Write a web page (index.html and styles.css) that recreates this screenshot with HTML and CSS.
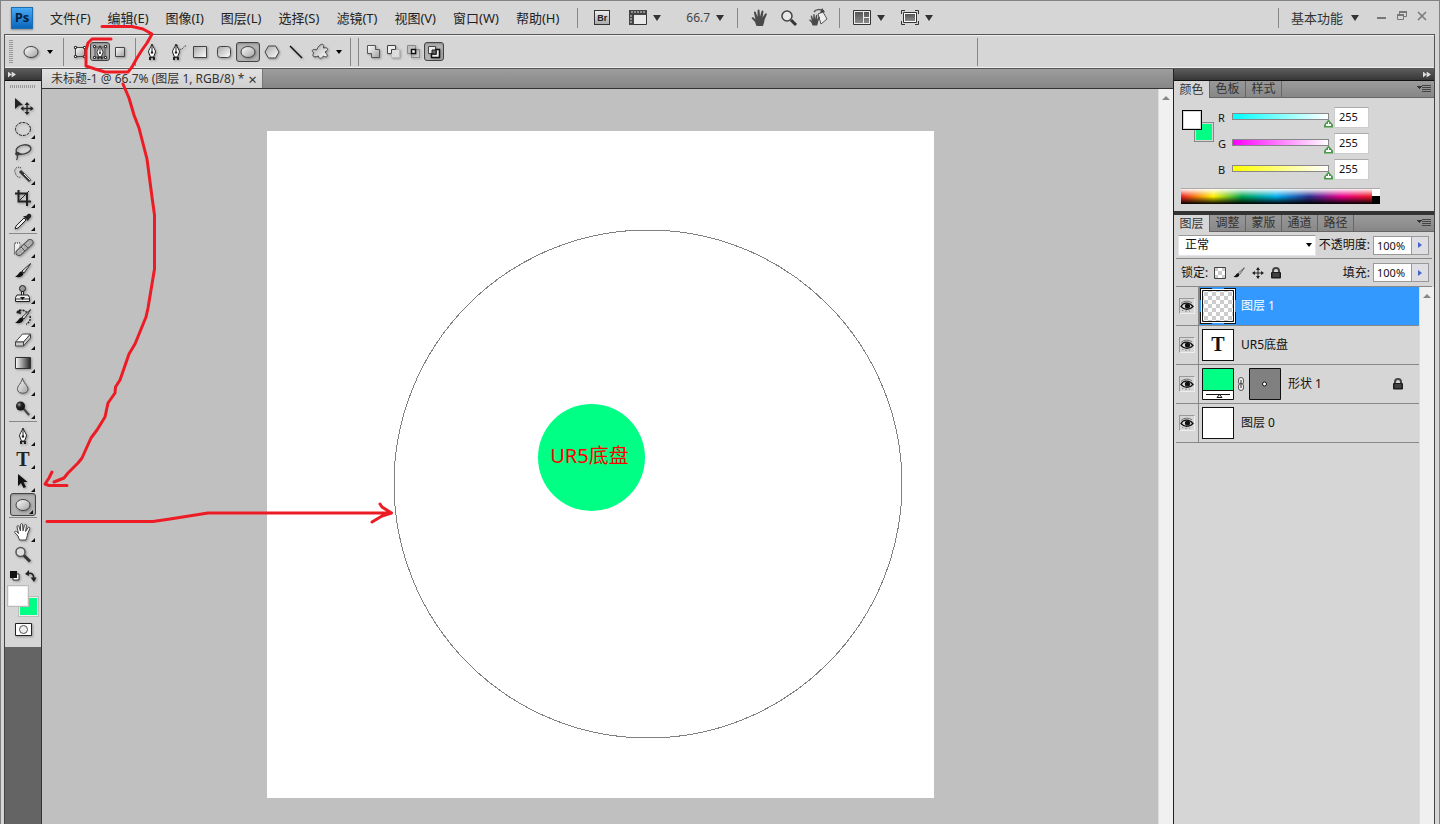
FILE: index.html
```html
<!DOCTYPE html>
<html lang="zh-CN">
<head>
<meta charset="utf-8">
<title>未标题-1</title>
<link rel="stylesheet" href="styles.css">
</head>
<body>
<svg class="defs" aria-hidden="true">
  <defs>
    <linearGradient id="shape" x1="0" y1="0" x2="1" y2="1"><stop offset="0" stop-color="#a8a8a8"/><stop offset="1" stop-color="#ffffff"/></linearGradient>
    <linearGradient id="shine" x1="0" y1="0" x2="1" y2="1"><stop offset="0" stop-color="#ffffff"/><stop offset="1" stop-color="#a0a0a0"/></linearGradient>
    <linearGradient id="ramp"><stop offset="0" stop-color="#ffffff"/><stop offset="1" stop-color="#222222"/></linearGradient>
    <linearGradient id="dark" x1="0" y1="0" x2="0" y2="1"><stop offset="0" stop-color="#555555"/><stop offset="1" stop-color="#8a8a8a"/></linearGradient>
    <radialGradient id="ball" cx=".35" cy=".35" r=".7"><stop offset="0" stop-color="#999999"/><stop offset=".4" stop-color="#222222"/><stop offset="1" stop-color="#111111"/></radialGradient>
    <pattern id="checks" width="8" height="8" patternUnits="userSpaceOnUse"><path fill="#fff" d="M0 0h8v8H0z"/><path fill="#ccc" d="M0 0h4v4H0zM4 4h4v4H4z"/></pattern>
    <symbol id="pen" viewBox="0 0 16 20"><path d="M8 2C6.500 6 4.500 8 4.500 10l2 5h3l2-5c0-2-2-4-3.500-8z" fill="#fff" stroke="#222"/><path d="M8 3v7" stroke="#222"/><circle cx="8" cy="10.500" r="1.200" fill="#222"/><path d="M5 15h6v3H9v-2H7v2H5z" fill="#222"/></symbol>
    <symbol id="oval" viewBox="0 0 20 20"><ellipse cx="10" cy="10" rx="7" ry="5.500" fill="url(#shine)" stroke="#444"/></symbol>
    <symbol id="hand" viewBox="0 0 20 20"><path d="M6.500 18 5 14 1.800 10.500c-.6-1.200 1-1.700 1.800-.9L5.500 11.500 4 5c-.3-1.600 1.500-2 1.900-.5L7.500 9 7.600 2.800c0-1.600 1.900-1.600 2 0L10 8.800l1.500-5.500c.4-1.500 2.200-1 1.900.5L12.600 9.500l2.400-3.700c.9-1.200 2.300-.3 1.700 1L14.500 12c-.2 2.500-1 4-1.500 6z"/></symbol>
    <symbol id="lock" viewBox="0 0 12 12"><path d="M3 6V4a3 3 0 0 1 6 0v2" fill="none" stroke="#444" stroke-width="2"/><rect x="1" y="5" width="10" height="6.500" rx="1" fill="#1c1c1c"/><path d="M2.500 7h7M2.500 9h7" stroke="#666"/></symbol>
    <symbol id="brush" viewBox="0 0 20 20"><path d="M17.500 2.500 9 10l2 2 6.500-9z" fill="#ddd" stroke="#333"/><path d="M9 10.500C6 10 6 14 2 15.500c3 1.500 8 .5 8.500-3z" fill="#111"/></symbol>
    <symbol id="eye" viewBox="0 0 14 12"><path d="M1 6.500C3 2.500 9 1.500 13 6.500 9.500 10.500 4 10 1 6.500z" fill="#ddd" stroke="#111" stroke-width="1.300"/><circle cx="7.500" cy="6" r="2.600" fill="#111"/><path d="M1 3.500C4 .5 9 .5 12 3M3 10l-.5 1M6 10.500V12M9 10.500l.5 1" fill="none" stroke="#555" stroke-width=".8"/></symbol>
  </defs>
</svg>

<header class="menubar">
  <div class="logo">Ps</div>
  <nav class="menus">
    <button>文件(F)</button><button>编辑(E)</button><button>图像(I)</button><button>图层(L)</button><button>选择(S)</button><button>滤镜(T)</button><button>视图(V)</button><button>窗口(W)</button><button>帮助(H)</button>
  </nav>
  <div class="apptools first">
    <button class="bridge" aria-label="Bridge">Br</button>
    <button class="drop" aria-label="查看额外内容"><svg width="18" height="16" viewBox="0 0 18 16"><path d="M.5.500h17v14H.5z" fill="#e8e8e8" stroke="#333"/><path d="M0 0h18v5H5v10H0z" fill="#444"/><path d="M3 1v2M6 1v2M9 1v2M12 1v2M15 1v2M1 6h2M1 9h2M1 12h2" stroke="#ddd"/></svg><i class="caret"></i></button>
    <label class="pick zoom"><select aria-label="缩放级别"><option>66.7</option></select><i class="caret"></i></label>
  </div>
  <div class="apptools second">
    <button aria-label="抓手工具"><svg width="20" height="20"><use href="#hand" fill="#4a4a4a"/></svg></button>
    <button aria-label="缩放工具"><svg width="20" height="20" viewBox="0 0 20 20"><circle cx="8" cy="8" r="5" fill="#e8e8e8" stroke="#444" stroke-width="1.500"/><path d="m12 12 5 5" stroke="#333" stroke-width="3"/></svg></button>
    <button aria-label="旋转视图工具"><svg width="20" height="20" viewBox="0 0 20 20"><path d="m10 6 5-2 4 7-6 5z" fill="#eee" stroke="#555"/><use href="#hand" x="0" y="5" width="14" height="14" fill="#4a4a4a"/><path d="M6 4c2-3 6-3 9-1" fill="none" stroke="#555" stroke-width="1.500"/><path d="m14 0 3 4-5 1z" fill="#444"/></svg></button>
  </div>
  <div class="apptools third">
    <button class="drop" aria-label="排列文档"><svg width="18" height="16" viewBox="0 0 18 16"><path d="M.5.500h17v14H.5z" fill="#eee" stroke="#333"/><path d="M2 2h8v11H2zM11 2h5v5h-5zM11 8h5v5h-5z" fill="url(#dark)"/></svg><i class="caret"></i></button>
    <button class="drop" aria-label="屏幕模式"><svg width="18" height="16" viewBox="0 0 18 16"><path d="M.5 4V.500H4M14 .5h3.500V4M17.500 11v3.500H14M4 14.500H.500V11" fill="none" stroke="#333"/><path d="M2.500 2.500h13v10h-13z" fill="#fff" stroke="#333"/><path d="M4 4h10v7H4z" fill="url(#dark)"/></svg><i class="caret"></i></button>
  </div>
  <div class="winside">
    <label class="pick workspace"><select aria-label="工作区"><option>基本功能</option></select><i class="caret"></i></label>
    <button aria-label="最小化"><svg width="10" height="12" viewBox="0 0 10 12"><path d="M0 8h9" stroke="#777" stroke-width="2"/></svg></button>
    <button aria-label="还原"><svg width="10" height="12" viewBox="0 0 10 12"><path d="M2.500 4V1.500h7v5H7M.5 5h6v4.500h-6z" fill="none" stroke="#777"/><path d="M0 5h7M2 2h8" stroke="#777" stroke-width="2"/></svg></button>
    <button aria-label="关闭"><svg width="10" height="12" viewBox="0 0 10 12"><path d="m1 2 8 8M9 2l-8 8" stroke="#777" stroke-width="1.500"/></svg></button>
  </div>
</header>

<section class="optbar" aria-label="选项栏">
  <i class="grip-v"></i>
  <button class="current" aria-label="椭圆工具预设"><svg width="20" height="20"><use href="#oval"/></svg><i class="caret small"></i></button>
  <div class="group modes">
    <button aria-label="形状图层"><svg width="16" height="16" viewBox="0 0 16 16"><path d="M3.500 3.500h9v9h-9z" fill="url(#shine)" stroke="#444"/><path d="M2.500 2.500h2v2h-2zM11.500 2.500h2v2h-2zM2.500 11.500h2v2h-2zM11.500 11.500h2v2h-2z" fill="#fff" stroke="#333"/></svg></button>
    <button class="on" aria-label="路径"><svg width="18" height="18" viewBox="0 0 18 18"><path d="M4 4h10v10H4z" fill="none" stroke="#555"/><path d="M2.500 2.500h2v2h-2zM13.500 2.500h2v2h-2zM2.500 13.500h2v2h-2zM13.500 13.500h2v2h-2z" fill="#fff" stroke="#333"/><use href="#pen" x="2" y="1" width="14" height="17"/></svg></button>
    <button aria-label="填充像素"><svg width="16" height="16" viewBox="0 0 16 16"><path d="M3.500 3.500h9v9h-9z" fill="url(#shine)" stroke="#444"/></svg></button>
  </div>
  <div class="group shapes">
    <button aria-label="钢笔"><svg width="16" height="20"><use href="#pen"/></svg></button>
    <button aria-label="自由钢笔"><svg width="22" height="20" viewBox="0 0 22 20"><use href="#pen" x="3" width="16" height="20"/><path d="M12 3c0 4 3 5 5 4s2-4 4-3" fill="none" stroke="#222" stroke-dasharray="1 1"/></svg></button>
    <button aria-label="矩形"><svg width="20" height="20" viewBox="0 0 20 20"><path d="M3.500 4.500h13v11h-13z" fill="url(#shape)" stroke="#444"/></svg></button>
    <button aria-label="圆角矩形"><svg width="20" height="20" viewBox="0 0 20 20"><rect x="3.500" y="4.500" width="13" height="11" rx="3" fill="url(#shape)" stroke="#444"/></svg></button>
    <button class="on" aria-label="椭圆"><svg width="20" height="20"><use href="#oval"/></svg></button>
    <button aria-label="多边形"><svg width="20" height="20" viewBox="0 0 20 20"><path d="M6.500 4h7l3.500 6-3.500 6h-7L3 10z" fill="url(#shape)" stroke="#444"/></svg></button>
    <button aria-label="直线"><svg width="20" height="20" viewBox="0 0 20 20"><path d="m4 4 12 12" stroke="#111" stroke-width="1.400"/></svg></button>
    <button aria-label="自定形状"><svg width="20" height="20" viewBox="0 0 20 20"><path d="M11 2.500c2-1 3 1 2.500 3.500 5-1 5.500 2 1.500 4 4 4 2 6-1.500 4-3 4-5 2-5 0-5 2-7 0-4.500-3-3-2-2-4.500 2.500-3 1-1 1.500-4 4.500-5.500z" fill="url(#shape)" stroke="#444"/></svg></button>
    <button class="tiny" aria-label="几何选项"><i class="caret small"></i></button>
  </div>
  <div class="group ops">
    <button aria-label="添加到形状区域"><svg width="16" height="16" viewBox="0 0 16 16"><path d="M1.500 1.500h8v4h4v8h-8v-4h-4z" fill="url(#shine)" stroke="#555"/></svg></button>
    <button aria-label="从形状区域减去"><svg width="16" height="16" viewBox="0 0 16 16"><path d="M5.500 5.500h8v8h-8z" fill="#ddd" stroke="#bbb"/><path d="M1.500 1.500h8v4h-4v4h-4z" fill="#eee" stroke="#444"/></svg></button>
    <button aria-label="交叉形状区域"><svg width="16" height="16" viewBox="0 0 16 16"><path d="M1.500 1.500h8v8h-8zM5.500 5.500h8v8h-8z" fill="none" stroke="#888"/><path d="M5.500 5.500h4v4h-4z" fill="#fff" stroke="#111" stroke-width="1.500"/></svg></button>
    <button class="on" aria-label="重叠形状区域除外"><svg width="16" height="16" viewBox="0 0 16 16"><path d="M2.500 2.500h7v7h-7z" fill="#eee" stroke="#444"/><path d="M10 5.500h3.500v8h-8V10H10z" fill="#eee" stroke="#111" stroke-width="1.500"/><path d="M6 6h4v4H6z" fill="#666" stroke="#222"/></svg></button>
  </div>
</section>

<main class="work">
  <aside class="toolbox" aria-label="工具">
    <button class="dockhead" aria-label="展开面板"><i class="ff"></i></button>
    <div class="tools">
      <i class="grip-h"></i>
      <button aria-label="移动"><svg width="22" height="20" viewBox="0 0 22 20"><path d="m3 2 8 7-4 .5L3 13z" fill="#222"/><path d="M15 7v11M9.500 12.500h11" stroke="#222" stroke-width="1.300"/><path d="m15 6 2.500 3h-5zM15 19l2.500-3h-5zM8.500 12.500l3-2.500v5zM21.500 12.500l-3-2.500v5z" fill="#222"/></svg></button>
      <button class="more" aria-label="椭圆选框"><svg width="20" height="20" viewBox="0 0 20 20"><ellipse cx="10" cy="10" rx="7.500" ry="6.500" fill="none" stroke="#222" stroke-dasharray="3 1"/></svg></button>
      <button class="more" aria-label="套索"><svg width="20" height="20" viewBox="0 0 20 20"><ellipse cx="10.500" cy="7.500" rx="7.500" ry="4.500" fill="none" stroke="#444" stroke-width="1.400" transform="rotate(-12 10.500 7.500)"/><path d="M4 10c-3 2 0 4 2 2.500S3.500 9.500 4 12s1 4-.5 6" fill="none" stroke="#333" stroke-width="1.200"/></svg></button>
      <button class="more" aria-label="快速选择"><svg width="20" height="20" viewBox="0 0 20 20"><path d="M8 3C5 1 1 3 2 7s3 6 6 5" fill="none" stroke="#333" stroke-dasharray="1 1"/><path d="m7 6 10 10" stroke="#333" stroke-width="3"/><path d="m11 9 6 6" stroke="#ddd"/></svg></button>
      <button class="more" aria-label="裁剪"><svg width="20" height="20" viewBox="0 0 20 20"><path d="M5.500 2v11.500H18M2 5.500h12V18" fill="none" stroke="#222" stroke-width="2"/><path d="M7 12 16 3" stroke="#222"/></svg></button>
      <button class="more" aria-label="吸管"><svg width="20" height="20" viewBox="0 0 20 20"><path d="m11 7 2 2-8 8-3 1 1-3z" fill="#eee" stroke="#222"/><path d="m10 5 5 5 1-2 2-2c1-2-1-4-3-3l-2 2z" fill="#222"/></svg></button>
      <hr>
      <button class="more" aria-label="修复画笔"><svg width="24" height="20" viewBox="0 0 24 20"><path d="M9 5H3.500v11H7" fill="#eee" stroke="#222" stroke-dasharray="1 1"/><path d="m8 14.500 11-10" stroke="#555" stroke-width="7" stroke-linecap="round"/><path d="m8 14.500 11-10" stroke="#aaa" stroke-width="5" stroke-linecap="round"/><path d="m7.500 13 11-9M9 16l11-10" stroke="#eee" stroke-dasharray="1 2"/><path d="m10 9 4 4M13 6l4 4" stroke="#555"/></svg></button>
      <button class="more" aria-label="画笔"><svg width="20" height="20"><use href="#brush"/></svg></button>
      <button class="more" aria-label="仿制图章"><svg width="20" height="20" viewBox="0 0 20 20"><circle cx="9.500" cy="4.500" r="3" fill="#999" stroke="#222"/><path d="M8.500 7.500h2v4h-2z" fill="#eee" stroke="#222"/><path d="M4 11h11l1.500 2.500v4H2.500v-4z" fill="#eee" stroke="#222"/><path d="M3 15h13" stroke="#333"/><path d="M7 13h5l-2.500 3z" fill="#111"/></svg></button>
      <button class="more" aria-label="历史记录画笔"><svg width="20" height="20" viewBox="0 0 20 20"><path d="M4 5c3-3 9-2 11 2M17 9c1 4-1 7-4 8" fill="none" stroke="#222" stroke-width="1.500" stroke-dasharray="2 1"/><path d="m3 6 4-4 1 5z" fill="#222"/><use href="#brush"/></svg></button>
      <button class="more" aria-label="橡皮擦"><svg width="20" height="20" viewBox="0 0 20 20"><path d="m2.500 12 7-8h8l-7 8z" fill="#fff" stroke="#444"/><path d="M2.500 12h8v4h-8zM10.500 12l7-8v4l-7 8z" fill="#ccc" stroke="#444"/></svg></button>
      <button class="more" aria-label="渐变"><svg width="20" height="20" viewBox="0 0 20 20"><path d="M2.500 4.500h15v11h-15z" fill="url(#ramp)" stroke="#333"/></svg></button>
      <button class="more" aria-label="模糊"><svg width="20" height="20" viewBox="0 0 20 20"><path d="M9.500 2C9 7 4 10 4.500 13.500c.5 5 10 5 10.500 0C15.500 10 10 7 9.500 2z" fill="url(#shine)" stroke="#555"/></svg></button>
      <button class="more" aria-label="减淡"><svg width="20" height="20" viewBox="0 0 20 20"><path d="m10 9 6 7" stroke="#444" stroke-width="2"/><circle cx="7.500" cy="7" r="4.500" fill="url(#ball)"/></svg></button>
      <hr>
      <button class="more" aria-label="钢笔工具"><svg width="16" height="20"><use href="#pen"/></svg></button>
      <button class="more type" aria-label="文字">T</button>
      <button class="more" aria-label="路径选择"><svg width="20" height="20" viewBox="0 0 20 20"><path d="M5 2v12l3-3 2.500 5 2.500-1-2.500-5h4z" fill="#111"/></svg></button>
      <button class="more on" aria-label="椭圆工具"><svg width="20" height="20"><use href="#oval"/></svg></button>
      <hr>
      <button class="more" aria-label="抓手"><svg width="20" height="20"><use href="#hand" fill="#fff" stroke="#444"/></svg></button>
      <button aria-label="缩放"><svg width="20" height="20" viewBox="0 0 20 20"><circle cx="7.500" cy="7" r="4.500" fill="#ddd" stroke="#555" stroke-width="1.500"/><path d="m11 10.500 6 6" stroke="#333" stroke-width="3"/></svg></button>
      <div class="mini">
        <button aria-label="默认颜色"><svg width="12" height="12" viewBox="0 0 12 12"><path d="M4 4h6v6H4z" fill="#fff" stroke="#333"/><path d="M1 1h7v7H1z" fill="#111"/></svg></button>
        <button aria-label="切换颜色"><svg width="12" height="12" viewBox="0 0 12 12"><path d="M3 3.500c4-1 6 1 5.500 5" fill="none" stroke="#222" stroke-width="1.500"/><path d="m0 4 4-4v6zM5.500 7.500h6L9 12z" fill="#222"/></svg></button>
      </div>
      <div class="swatches"><button class="back" aria-label="背景色"></button><button class="fore" aria-label="前景色"></button></div>
      <button class="mask" aria-label="快速蒙版"><svg width="17" height="13" viewBox="0 0 17 13"><path d="M.5.500h16v12H.5z" fill="#fff" stroke="#222"/><circle cx="8.500" cy="6.500" r="4" fill="#eee" stroke="#555"/></svg></button>
    </div>
  </aside>

  <section class="document">
    <div class="doctabs"><div class="doctab"><span>未标题-1 @ 66.7% (图层 1, RGB/8) *</span><button aria-label="关闭文档">×</button></div></div>
    <div class="view">
      <div class="stage">
        <div class="artboard">
          <div class="disc">UR5底盘</div>
          <svg class="ring" viewBox="0 0 510 510"><circle cx="255" cy="255" r="254" fill="none" stroke="#808080" shape-rendering="crispEdges"/></svg>
        </div>
      </div>
      <div class="scroll"><i class="up"></i></div>
    </div>
  </section>

  <aside class="dock">
    <button class="dockhead right" aria-label="折叠面板"><i class="ff"></i></button>
    <section class="panel">
      <div class="tabs"><button class="active">颜色</button><button>色板</button><button>样式</button><i class="flyout"></i></div>
      <div class="color">
        <div class="pair"><button class="back" aria-label="背景色"></button><button class="fore" aria-label="前景色"></button></div>
        <div class="channels">
          <div class="channel"><label for="r">R</label><input class="cyan" type="range" min="0" max="255" value="255" aria-label="R"><input id="r" type="text" value="255"></div>
          <div class="channel"><label for="g">G</label><input class="magenta" type="range" min="0" max="255" value="255" aria-label="G"><input id="g" type="text" value="255"></div>
          <div class="channel"><label for="b">B</label><input class="yellow" type="range" min="0" max="255" value="255" aria-label="B"><input id="b" type="text" value="255"></div>
        </div>
        <div class="spectrum"><i class="rainbow"></i><i class="bw"></i></div>
      </div>
    </section>
    <section class="panel layers">
      <div class="tabs"><button class="active">图层</button><button>调整</button><button>蒙版</button><button>通道</button><button>路径</button><i class="flyout"></i></div>
      <div class="row blend">
        <label class="pick mode"><select aria-label="混合模式"><option>正常</option></select><i class="caret small"></i></label>
        <div class="amount"><label for="op">不透明度:</label><input id="op" type="text" value="100%"><button aria-label="不透明度滑块"></button></div>
      </div>
      <div class="row locks">
        <span>锁定:</span>
        <button aria-label="锁定透明像素"><svg width="12" height="12" viewBox="0 0 12 12"><path d="M.5.500h11v11H.5z" fill="#fff" stroke="#444"/><path d="M1 1h3v3H1zM8 1h3v3H8zM4 4h4v4H4zM1 8h3v3H1zM8 8h3v3H8z" fill="#ccc"/></svg></button>
        <button aria-label="锁定图像像素"><svg width="14" height="14"><use href="#brush"/></svg></button>
        <button aria-label="锁定位置"><svg width="12" height="12" viewBox="0 0 12 12"><path d="M6 1v10M1 6h10" stroke="#222"/><path d="m6 0 2 3H4zM6 12l2-3H4zM0 6l3-2v4zM12 6 9 4v4z" fill="#222"/></svg></button>
        <button aria-label="锁定全部"><svg width="12" height="12"><use href="#lock"/></svg></button>
        <div class="amount"><label for="fill">填充:</label><input id="fill" type="text" value="100%"><button aria-label="填充滑块"></button></div>
      </div>
      <div class="layerlist">
        <ul>
          <li class="selected"><button class="vis" aria-label="可见性"><svg width="14" height="12"><use href="#eye"/></svg></button><div class="layer"><svg class="thumb framed" width="36" height="36" viewBox="0 0 36 36"><path d="M1 1h34v34H1z" fill="#fff"/><path d="M12 0h12v1H12zM12 35h12v1H12zM0 12h1v12H0zM35 12h1v12h-1z" fill="#39f"/><path d="M0 .5h12M24 .5h12M0 35.500h12M24 35.500h12M.5 0v12M.5 24v12M35.500 0v12M35.500 24v12" stroke="#111"/><path d="M2.500 2.500h31v31h-31z" fill="url(#checks)" stroke="#111"/></svg><span>图层 1</span></div></li>
          <li><button class="vis" aria-label="可见性"><svg width="14" height="12"><use href="#eye"/></svg></button><div class="layer"><div class="thumb text">T</div><span>UR5底盘</span></div></li>
          <li><button class="vis" aria-label="可见性"><svg width="14" height="12"><use href="#eye"/></svg></button><div class="layer"><svg class="thumb" width="32" height="32" viewBox="0 0 32 32"><path d="M.5.500h31v31H.5z" fill="#00ff85" stroke="#111"/><path d="M1 23h30v8H1z" fill="#fff"/><path d="M0 22.500h32M4 26.500h24" stroke="#111"/><path d="m15 29.500 2.500-3 2.500 3z" fill="#fff" stroke="#111"/></svg><svg class="chain" width="8" height="14" viewBox="0 0 8 14"><rect x="1.500" y=".5" width="5" height="7" rx="2.500" fill="#eee" stroke="#555"/><rect x="1.500" y="6.500" width="5" height="7" rx="2.500" fill="#eee" stroke="#555"/><path d="M4 3v8" stroke="#333"/></svg><svg class="thumb" width="32" height="32" viewBox="0 0 32 32"><path d="M.5.500h31v31H.5z" fill="#808080" stroke="#111"/><circle cx="15.500" cy="16" r="2" fill="#fff" stroke="#111"/></svg><span>形状 1</span><svg class="locked" width="12" height="12"><use href="#lock"/></svg></div></li>
          <li><button class="vis" aria-label="可见性"><svg width="14" height="12"><use href="#eye"/></svg></button><div class="layer"><div class="thumb"></div><span>图层 0</span></div></li>
        </ul>
        <div class="scroll"><i class="up"></i></div>
      </div>
    </section>
  </aside>
</main>

<svg class="notes" width="420" height="560" viewBox="0 0 420 560" aria-hidden="true">
  <path d="M102 26.500h30l11 2.500 9 5-5 9-5 7-5 8-5 9-4 5h-23l-10-3-9-3V50l2-7 4-4h19"/>
  <path d="m123 84 6 14 5 17 5 13 8 31 5 38 2.500 18v54L148 308l-2 9-11 27-6 10-9 26-4.500 7-.5 6-7 10-3 14-8 13-6 8-9 20-4 5-10 10-4 5-10 4"/>
  <path d="m52 472-3 6-4 6 4 1.500h18"/>
  <path d="M47 521.500h106l17-2.500 38-6h183M380 504l2 3 9.500 6-9.500 3-10 6"/>
</svg>
</body>
</html>
```

FILE: styles.css
```css
* { box-sizing: border-box; }
html, body { height: 100%; }
body {
  margin: 0; display: flex; flex-direction: column; overflow: hidden;
  background: #d6d6d6; border: 1px solid #828282; border-width: 1px 1px 0;
  padding: 0 4px 0 3px; position: relative;
  font: 12px/16px "Noto Sans", "Noto Sans CJK SC", sans-serif; color: #111;
}
.defs { position: absolute; width: 0; height: 0; }
button { border: 0; padding: 0; margin: 0; background: none; font: inherit; color: inherit; display: flex; align-items: center; justify-content: center; }
svg { display: block; flex: none; }
select, input { font: inherit; color: inherit; border: 0; margin: 0; padding: 0; border-radius: 0; background: none; appearance: none; outline: 0; }
i { display: block; flex: none; }
.caret { border: 4px solid transparent; border-top: 6px solid #333; border-bottom: 0; }
.caret.small { border-width: 4px 3px 0; border-top-color: #000; }
.tools svg, .optbar svg { filter: drop-shadow(1px 1px 1px rgba(0, 0, 0, .3)); }

.menubar { flex: none; height: 33px; display: flex; align-items: center; font-size: 13px; color: #222; }
.logo { width: 22px; height: 22px; margin: 0 17px 0 7px; background: linear-gradient(#48a9f5, #0b66bb); border: 1px solid #1c6eb0; color: #04203d; font: bold 13px/18px "Open Sans", sans-serif; text-align: center; box-shadow: 0 1px 2px #888; }
.menus { display: flex; gap: 17px; }
.apptools { display: flex; align-items: center; height: 20px; border-left: 1px solid #888; }
.first { margin-left: 18px; padding-left: 16px; }
.second { margin-left: 13px; padding-left: 12px; gap: 9px; }
.third { margin-left: 11px; padding-left: 13px; gap: 16px; }
.bridge { width: 16px; height: 15px; border: 1px solid #333; background: linear-gradient(#eee, #aaa); font: bold 9px/12px "Liberation Sans", sans-serif; margin-right: 19px; }
.drop { gap: 6px; }
.pick { display: flex; align-items: center; }
.zoom { margin-left: 25px; font-size: 12px; }
.zoom select { width: 30px; color: #444; }
.winside { margin-left: auto; display: flex; align-items: center; gap: 10px; padding-right: 8px; }
.winside button { margin-bottom: 4px; }
.workspace { border-left: 1px solid #888; height: 20px; padding-left: 12px; margin-right: 8px; }
.workspace select { width: 60px; color: #333; }

.optbar { flex: none; height: 35px; display: flex; align-items: center; border: 1px solid #555; box-shadow: inset 0 1px #f0f0f0, inset 0 -1px #eee; padding-left: 4px; }
.grip-v { width: 4px; height: 24px; background: repeating-linear-gradient(#999 0 1px, transparent 1px 2px); }
.current { margin-left: 8px; gap: 6px; }
.group { display: flex; align-items: center; border-left: 1px solid #888; height: 28px; }
.modes { margin-left: 10px; padding: 0 5px 0 6px; }
.modes button, .ops button { width: 20px; height: 19px; }
.shapes { padding: 0 4px 0 4px; border-right: 1px solid #888; }
.shapes button { width: 24px; height: 20px; }
.shapes .tiny { width: 14px; }
.ops { margin-left: 7px; padding-left: 5px; flex: 0 0 620px; border-right: 1px solid #888; }
.modes .on, .ops .on, .shapes .on, .tools .on { border: 1px solid #444; border-radius: 3px; background: #b4b4b4; box-shadow: inset 0 1px 2px #888; }

.work { flex: 1; min-height: 0; display: flex; border: 1px solid #444; border-width: 0 1px; }
.toolbox { flex: none; width: 37px; background: #646464; border-right: 1px solid #333; }
.dockhead { width: 100%; height: 12px; padding-left: 3px; justify-content: flex-start; background: linear-gradient(#5c5c5c, #363636); border-bottom: 1px solid #111; }
.dockhead.right { justify-content: flex-end; padding-right: 3px; }
.ff { width: 8px; height: 6px; background: #ddd; clip-path: polygon(0 0, 45% 50%, 45% 0, 100% 50%, 45% 100%, 45% 50%, 0 100%); }
.tools { background: #d6d6d6; height: 566px; padding: 4px 4px 0; }
.grip-h { height: 3px; margin: 0 1px 6px; background: repeating-linear-gradient(90deg, #999 0 1px, transparent 1px 2px); }
.tools > button { position: relative; width: 28px; height: 23px; }
.tools > .on { width: 26px; margin: 0 1px; }
.more::after { content: ""; position: absolute; right: 2px; bottom: 1px; border: 2px solid #111; border-top-color: transparent; border-left-color: transparent; }
.tools hr { border: 0; height: 1px; background: #888; margin: 1px 0 2px; }
.type { font: bold 20px/20px "Liberation Serif", serif; color: #222; }
.mini { display: flex; justify-content: space-between; padding: 4px 0; }
.swatches { position: relative; height: 30px; margin: 0 -1px; }
.swatches button { position: absolute; width: 19px; height: 19px; right: 0; bottom: 0; background: #00ff85; border: 1px solid #eee; outline: 1px solid #bbb; }
.swatches .fore { right: auto; left: 0; top: 0; width: 20px; height: 20px; background: #fff; }
.tools > .mask { margin-top: 2px; }

.document { flex: 1; min-width: 0; display: flex; flex-direction: column; }
.doctabs { height: 20px; display: flex; background: linear-gradient(#9d9d9d, #868686); border-bottom: 1px solid #333; }
.doctab { display: flex; align-items: center; gap: 4px; padding: 0 5px 0 9px; background: linear-gradient(#e2e2e2, #cfcfcf); border-right: 1px solid #777; color: #333; white-space: nowrap; }
.doctab button { font-size: 15px; }
.view { flex: 1; min-height: 0; display: flex; background: #c0c0c0; }
.stage { flex: 1; min-width: 0; display: flex; justify-content: center; align-items: flex-start; padding-top: 42px; overflow: hidden; }
.artboard { position: relative; flex: none; width: 667px; height: 667px; background: #fff; }
.disc { position: absolute; left: 271px; top: 273px; width: 107px; height: 107px; padding-right: 3px; border-radius: 50%; background: #00ff85; color: #f00; font-size: 20px; line-height: 104px; text-align: center; white-space: nowrap; }
.ring { position: absolute; left: 126px; top: 98px; width: 510px; height: 510px; }
.scroll { flex: none; width: 15px; background: #f0f0f0; border-left: 1px solid #ddd; padding: 7px 0 0 3px; }
.up { width: 8px; height: 4px; background: #888; clip-path: polygon(50% 0, 100% 100%, 0 100%); }

.dock { flex: none; width: 261px; border-left: 1px solid #222; display: flex; flex-direction: column; }
.tabs { display: flex; height: 17px; background: linear-gradient(#9c9c9c, #868686); border-bottom: 1px solid #666; padding-right: 3px; }
.tabs button { width: 36px; border-right: 1px solid #666; color: #333; background: linear-gradient(#999, #888); }
.tabs .active { background: #d6d6d6; margin-bottom: -1px; }
.flyout { align-self: center; margin-left: auto; width: 14px; height: 8px; background: linear-gradient(#444, #444) right 0/9px 1px, linear-gradient(#444, #444) right 2px/9px 1px, linear-gradient(#444, #444) right 4px/9px 1px, linear-gradient(#444, #444) right 6px/9px 1px, conic-gradient(from -45deg at 50% 100%, #333 90deg, transparent 0) 0 1px/5px 3px; background-repeat: no-repeat; }
.color { display: grid; grid-template-columns: 36px 1fr; padding: 7px 8px 7px; border-bottom: 4px solid #333; font-size: 11px; }
.pair { position: relative; width: 32px; height: 32px; margin-top: 5px; }
.pair button { position: absolute; right: 0; bottom: 0; width: 20px; height: 20px; background: #00ff85; border: 1px solid #888; box-shadow: inset 0 0 0 1px #d6d6d6; }
.pair .fore { right: auto; left: 0; top: 0; background: #fff; border-color: #000; }
.channel { display: flex; height: 26px; align-items: center; }
.channel label { width: 9px; }
.channel input[type=text] { width: 35px; height: 21px; margin: 0 0 2px 1px; padding: 0 3px 2px 4px; background: #fff; border: 1px solid #ccc; border-top-color: #aaa; }
.cyan { --c: #0ff; }
.magenta { --c: #f0f; }
.yellow { --c: #ff0; }
.channel input[type=range] { width: 106px; height: 14px; margin-top: 4px; background: linear-gradient(90deg, var(--c), #fff) 6px 1px/95px 5px no-repeat, linear-gradient(#888, #888) 5px 0/97px 7px no-repeat; }
.channel input::-webkit-slider-thumb { appearance: none; width: 9px; height: 8px; margin-top: 7px; background: conic-gradient(from -40deg at 50% 2px, transparent 0) no-repeat, linear-gradient(#fff, #fff) 2px 4px/5px 2px no-repeat, linear-gradient(#fff, #fff) 4px 2px/1px 3px no-repeat, #4a9a4a; clip-path: polygon(50% 0, 100% 65%, 100% 100%, 0 100%, 0 65%); }
.spectrum { grid-column: 1 / -1; width: 199px; height: 16px; margin: 5px 0 0 -1px; display: flex; border-top: 1px solid #aaa; }
.rainbow { flex: 1; background: linear-gradient(rgba(255,255,255,.95), transparent 50%, #000), linear-gradient(90deg, #ed1c24, #fff200 17%, #00a651 32%, #00aeef 50%, #2e3192 67%, #ec008c 84%, #ed1c24); }
.bw { width: 8px; background: linear-gradient(#fff 50%, #000 50%); }
.layers { flex: 1; display: flex; flex-direction: column; }
.row { display: flex; align-items: center; margin: 0 2px; padding: 0 3px 0 2px; height: 27px; border-bottom: 1px solid #888; }
.mode { width: 138px; height: 21px; background: #fff; border: 1px solid #e4e4ea; border-top-color: #999; padding: 0 3px 0 6px; }
.mode select { flex: 1; }
.amount { margin-left: auto; display: flex; align-items: center; }
.amount label { margin-right: 3px; }
.amount input { width: 39px; height: 19px; border: 1px solid #999; background: #fff; padding-left: 3px; font-size: 11px; }
.amount button { width: 17px; height: 19px; border: 1px solid #999; border-left: 0; background: #dfdfe3; }
.amount button::before { content: ""; border: 3px solid transparent; border-left: 4px solid #4466cc; border-right: 0; }
.locks { gap: 6px; padding-left: 5px; height: 28px; }
.layerlist { flex: 1; display: flex; margin-left: 2px; }
.layerlist ul { flex: 1; list-style: none; margin: 0; padding: 0; }
.layerlist li { display: flex; height: 39px; border-bottom: 1px solid #888; }
.vis { width: 23px; border-right: 1px solid #888; }
.vis svg { box-sizing: content-box; padding: 1px 0; border: 1px solid #999; border-right-color: #eee; border-bottom-color: #eee; }
.layer { flex: 1; display: flex; align-items: center; padding-left: 3px; }
.layer span { margin-left: 7px; }
.selected .layer { background: #3399ff; color: #fff; padding-left: 1px; }
.selected span { margin-left: 5px; }
.thumb { flex: none; width: 32px; height: 32px; }
div.thumb { background: #fff; border: 1px solid #111; }
.framed { width: 36px; height: 36px; }
.text { font: bold 20px/29px "Liberation Serif", serif; text-align: center; }
.chain { margin: 0 4px 0 3px; }
.locked { margin: 0 15px 0 auto; }

.notes { position: absolute; left: -1px; top: -1px; pointer-events: none; fill: none; stroke: #ed1c24; stroke-width: 3; stroke-linecap: round; stroke-linejoin: round; }
```
